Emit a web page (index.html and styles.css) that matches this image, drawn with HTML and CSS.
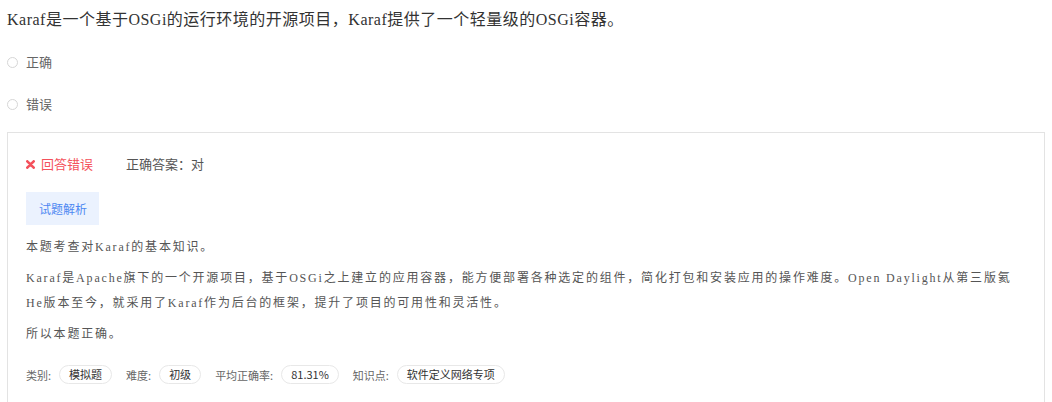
FILE: index.html
```html
<!DOCTYPE html>
<html lang="zh-CN">
<head>
<meta charset="utf-8">
<title>试题</title>
<link rel="stylesheet" href="styles.css">
</head>
<body>
<div class="page">
  <div class="question">Karaf是一个基于OSGi的运行环境的开源项目，Karaf提供了一个轻量级的OSGi容器。</div>
  <div class="options">
    <label class="option"><span class="radio"></span><span class="option-text">正确</span></label>
    <label class="option"><span class="radio"></span><span class="option-text">错误</span></label>
  </div>
  <div class="result">
    <div class="answer-row">
      <span class="wrong"><svg class="x-icon" width="9" height="9" viewBox="0 0 9 9"><path d="M1.3 1.3 L7.7 7.7 M7.7 1.3 L1.3 7.7" stroke="#f4515c" stroke-width="2.6" stroke-linecap="round"/></svg>回答错误</span>
      <span class="correct">正确答案：对</span>
    </div>
    <div class="btn-row"><span class="btn">试题解析</span></div>
    <div class="analysis">
      <p>本题考查对Karaf的基本知识。</p>
      <p>Karaf是Apache旗下的一个开源项目，基于OSGi之上建立的应用容器，能方便部署各种选定的组件，简化打包和安装应用的操作难度。Open Daylight从第三版氦He版本至今，就采用了Karaf作为后台的框架，提升了项目的可用性和灵活性。</p>
      <p>所以本题正确。</p>
    </div>
    <div class="meta">
      <span class="meta-label">类别:</span><span class="pill">模拟题</span>
      <span class="meta-label">难度:</span><span class="pill">初级</span>
      <span class="meta-label">平均正确率:</span><span class="pill">81.31%</span>
      <span class="meta-label">知识点:</span><span class="pill">软件定义网络专项</span>
    </div>
  </div>
</div>
</body>
</html>
```

FILE: styles.css
```css
* { box-sizing: border-box; }
html, body { margin: 0; padding: 0; background: #fff; }
body { font-family: "Noto Sans CJK SC", sans-serif; color: #333; }

.page { padding: 8px 7px 0 7px; }

.question {
  font-family: "Liberation Serif", "Noto Sans CJK SC", serif;
  font-size: 16px;
  letter-spacing: 0.5px;
  line-height: 24px;
  color: #333;
}

.options { margin-top: 9px; }
.option {
  display: flex;
  align-items: center;
  height: 42px;
}
.radio {
  width: 11px;
  height: 11px;
  border: 1px solid #d6d6d6;
  border-radius: 50%;
  background: #fff;
  flex: none;
}
.option-text {
  margin-left: 8px;
  font-size: 13px;
  color: #666;
  line-height: 20px;
}

.result {
  margin-top: 7px;
  border: 1px solid #e3e3e3;
  padding: 21px 18px 30px 18px;
}

.answer-row {
  display: flex;
  align-items: center;
  height: 20px;
  font-size: 13px;
  line-height: 20px;
}
.wrong {
  display: flex;
  align-items: center;
  color: #f4515c;
}
.x-icon { margin-right: 6px; margin-top: 1px; }
.correct { margin-left: 33px; color: #555; }

.btn-row { margin-top: 18px; display: flex; }
.btn {
  display: block;
  height: 33px;
  line-height: 33px;
  padding: 0 12px 0 13px;
  background: #ebf2fe;
  color: #4e88f2;
  font-size: 12px;
}

.analysis {
  margin-top: 10px;
  font-family: "Liberation Serif", "Noto Sans CJK SC", serif;
  font-size: 12px;
  letter-spacing: 1.8px;
  line-height: 25px;
  color: #555;
}
.analysis p { margin: 0 0 6px 0; }
.analysis p:last-child { margin-bottom: 0; }

.meta {
  margin-top: 18px;
  display: flex;
  align-items: center;
  font-size: 11px;
}
.meta-label { color: #666; margin-right: 8px; }
.pill {
  height: 19px;
  line-height: 17px;
  padding: 0 9px;
  border: 1px solid #e8e8e8;
  border-radius: 10px;
  color: #333;
  margin-right: 14px;
}
```
